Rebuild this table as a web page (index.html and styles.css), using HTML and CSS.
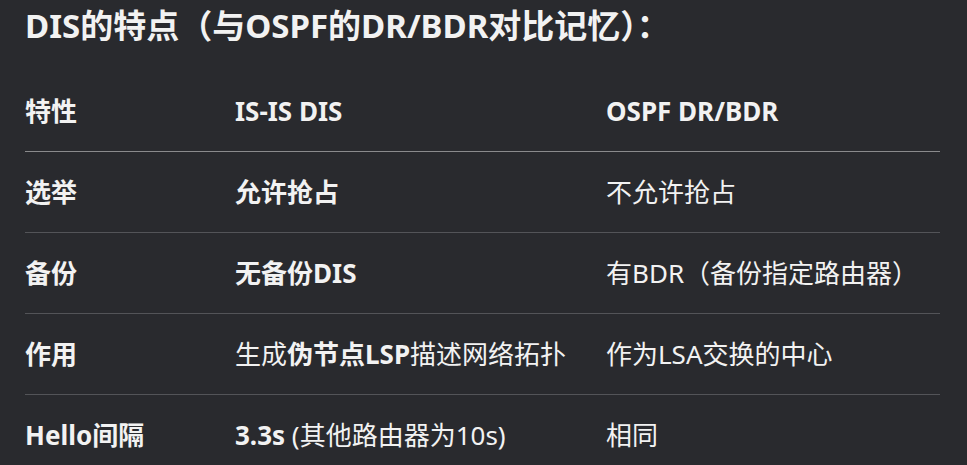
FILE: index.html
```html
<!DOCTYPE html>
<html lang="zh-CN">
<head>
<meta charset="utf-8">
<title>DIS的特点</title>
<link rel="stylesheet" href="styles.css">
</head>
<body>
<main class="doc">
  <h3 class="title">DIS的特点（与OSPF的DR/BDR对比记忆）：</h3>
  <table class="cmp">
    <thead>
      <tr>
        <th class="c1">特性</th>
        <th class="c2">IS-IS DIS</th>
        <th class="c3">OSPF DR/BDR</th>
      </tr>
    </thead>
    <tbody>
      <tr>
        <td><strong>选举</strong></td>
        <td><strong>允许抢占</strong></td>
        <td>不允许抢占</td>
      </tr>
      <tr>
        <td><strong>备份</strong></td>
        <td><strong>无备份DIS</strong></td>
        <td>有BDR（备份指定路由器）</td>
      </tr>
      <tr>
        <td><strong>作用</strong></td>
        <td>生成<strong>伪节点LSP</strong>描述网络拓扑</td>
        <td>作为LSA交换的中心</td>
      </tr>
      <tr>
        <td><strong>Hello间隔</strong></td>
        <td><strong>3.3s</strong> (其他路由器为10s)</td>
        <td>相同</td>
      </tr>
    </tbody>
  </table>
</main>
</body>
</html>
```
FILE: styles.css
```css
html, body {
  margin: 0;
  padding: 0;
  background: #292a2e;
}
body {
  color: #f2f2f2;
  font-family: "Noto Sans", "Noto Sans CJK SC", sans-serif;
  overflow: hidden;
}
.doc {
  padding: 3px 27px 0 25px;
}
.title {
  margin: 0;
  font-size: 33px;
  line-height: 45px;
  font-weight: 700;
}
.cmp {
  margin-top: 23px;
  border-collapse: collapse;
  width: 915px;
  table-layout: fixed;
  font-size: 26px;
}
.cmp th, .cmp td {
  text-align: left;
  padding: 0;
  height: 80px;
  line-height: 36px;
  vertical-align: middle;
  white-space: nowrap;
}
.cmp th {
  font-weight: 700;
}
.cmp thead tr {
  border-bottom: 1px solid #8a8a8c;
}
.cmp tbody tr {
  border-bottom: 1px solid #535458;
}
.cmp tbody tr:last-child {
  border-bottom: none;
}
.c1 { width: 210px; }
.c2 { width: 371px; }
.c3 { width: 334px; }
strong { font-weight: 700; }
```
